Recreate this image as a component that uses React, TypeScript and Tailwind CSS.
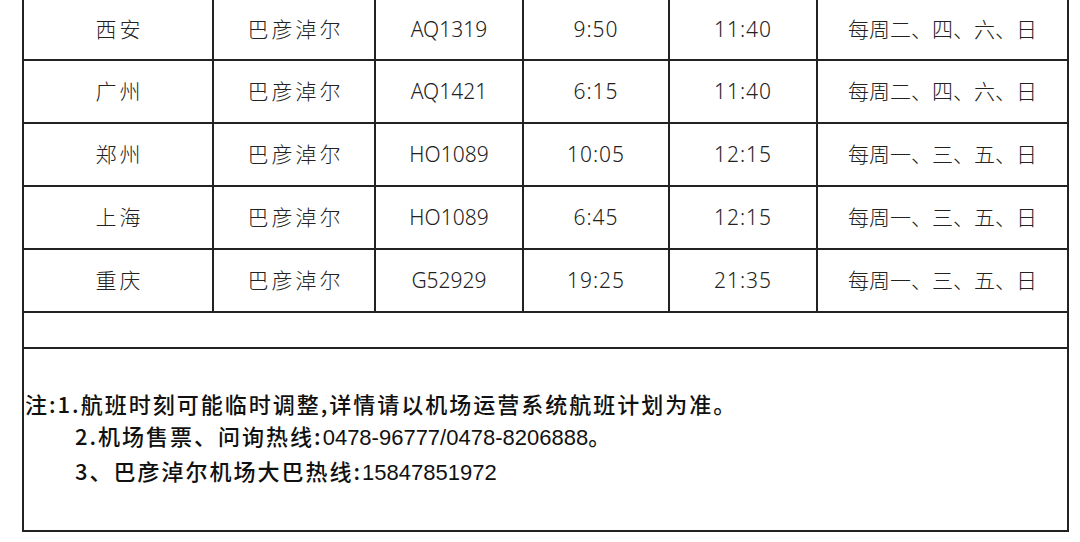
const rows = [
  { from: '西安', to: '巴彦淖尔', flight: 'AQ1319', dep: '9:50', arr: '11:40', days: '每周二、四、六、日' },
  { from: '广州', to: '巴彦淖尔', flight: 'AQ1421', dep: '6:15', arr: '11:40', days: '每周二、四、六、日' },
  { from: '郑州', to: '巴彦淖尔', flight: 'HO1089', dep: '10:05', arr: '12:15', days: '每周一、三、五、日' },
  { from: '上海', to: '巴彦淖尔', flight: 'HO1089', dep: '6:45', arr: '12:15', days: '每周一、三、五、日' },
  { from: '重庆', to: '巴彦淖尔', flight: 'G52929', dep: '19:25', arr: '21:35', days: '每周一、三、五、日' },
];

const cell = 'flex items-center justify-center border-r-2 border-[#222]';

export default function App() {
  return (
    <div
      className="w-[1080px] h-[542px] overflow-hidden bg-white text-[#222]"
      style={{ fontFamily: '"Noto Sans", "Noto Sans CJK SC", sans-serif' }}
    >
      <div className="ml-[22px] w-[1047px] border-x-2 border-b-2 border-[#222]">
        {rows.map((r, i) => (
          <div
            key={i}
            className={`flex border-b-2 border-[#222] text-[21px] font-light ${i === 0 ? 'h-[61px]' : 'h-[63px]'}`}
          >
            <div className={`${cell} w-[190px] tracking-[3px] pl-[3px]`}>{r.from}</div>
            <div className={`${cell} w-[162px] tracking-[3px] pl-[3px]`}>{r.to}</div>
            <div className={`${cell} w-[148px]`}>{r.flight}</div>
            <div className={`${cell} w-[146px] tracking-[1px]`}>{r.dep}</div>
            <div className={`${cell} w-[148px] tracking-[1px]`}>{r.arr}</div>
            <div className="flex flex-1 items-center justify-center">{r.days}</div>
          </div>
        ))}
        <div className="h-[36px] border-b-2 border-[#222]" />
        {/* notes */}
        <div
          className="h-[181px] pt-[38px] pl-[1px] text-[22px] leading-[32px] font-medium tracking-[2px] text-[#111]"
          style={{ fontFamily: '"Noto Sans CJK SC", sans-serif' }}
        >
          <p>注:1.航班时刻可能临时调整,详情请以机场运营系统航班计划为准。</p>
          <p className="pl-[50px]">
            2.机场售票、问询热线:<span className="tracking-normal font-normal" style={{ fontFamily: '"Liberation Sans", sans-serif' }}>0478-96777/0478-8206888</span>。
          </p>
          <p className="pl-[50px]">
            3、巴彦淖尔机场大巴热线:<span className="tracking-normal font-normal" style={{ fontFamily: '"Liberation Sans", sans-serif' }}>15847851972</span>
          </p>
        </div>
      </div>
    </div>
  );
}
